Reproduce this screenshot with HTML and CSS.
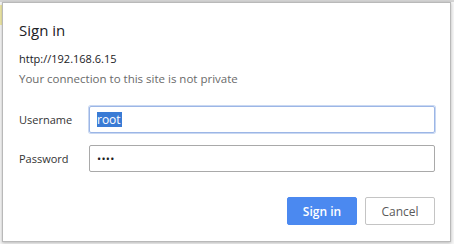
FILE: index.html
```html
<!DOCTYPE html>
<html lang="en">
<head>
<meta charset="utf-8">
<title>Sign in</title>
<link rel="stylesheet" href="styles.css">
</head>
<body>
<div class="backdrop">
  <div class="dialog">
    <h1 class="title">Sign in</h1>
    <div class="origin">http://192.168.6.15</div>
    <div class="warning">Your connection to this site is not private</div>
    <div class="fields">
      <div class="row">
        <label class="label">Username</label>
        <div class="input focused"><span class="selected">root</span></div>
      </div>
      <div class="row">
        <label class="label">Password</label>
        <div class="input"><span class="dots">••••</span></div>
      </div>
    </div>
    <div class="actions">
      <button class="btn primary">Sign in</button>
      <button class="btn secondary">Cancel</button>
    </div>
  </div>
</div>
</body>
</html>
```
FILE: styles.css
```css
html, body {
  margin: 0;
  padding: 0;
}
body {
  width: 454px;
  height: 244px;
  overflow: hidden;
  background: #f3f3f3;
  font-family: "Open Sans", "Noto Sans", sans-serif;
}
.backdrop {
  width: 454px;
  height: 244px;
  padding: 2px 0 0 2px;
  box-sizing: border-box;
  background:
    linear-gradient(#efe8a6, #efe8a6) 0 5px / 2px 20px no-repeat,
    linear-gradient(#d4d4d4 0 2px, #f6f6f6 2px);
}
.dialog {
  width: 447px;
  height: 238px;
  box-sizing: content-box;
  border: 1px solid #b9b9b9;
  background: #ffffff;
  box-shadow: 0 1px 3px rgba(0, 0, 0, 0.25);
  display: flex;
  flex-direction: column;
}
.title {
  margin: 16px 0 0 16px;
  font-size: 15px;
  font-weight: 400;
  line-height: 22px;
  color: #202124;
}
.origin {
  margin: 10px 0 0 16px;
  font-size: 11px;
  line-height: 16px;
  color: #202124;
}
.warning {
  margin: 4px 0 0 16px;
  font-size: 11.5px;
  line-height: 16px;
  color: #6a6a6a;
}
.fields {
  margin: 19px 15px 0 16px;
  display: flex;
  flex-direction: column;
  gap: 12px;
}
.row {
  display: flex;
  align-items: center;
}
.label {
  width: 70px;
  font-size: 11px;
  line-height: 16px;
  color: #333333;
}
.input {
  box-sizing: border-box;
  width: 346px;
  height: 27px;
  border: 1px solid #a9a9a9;
  border-radius: 2px;
  padding: 0 7px;
  display: flex;
  align-items: center;
  font-size: 12px;
  color: #202124;
}
.input.focused {
  border-color: #9cb6e6;
  box-shadow: 0 0 0 1px #c9d8f2;
}
.selected {
  background: #3a7bd5;
  color: #ffffff;
  line-height: 15px;
  padding-right: 1px;
}
.dots {
  font-size: 11px;
  letter-spacing: 0.3px;
  color: #202124;
}
.actions {
  margin: 25px 15px 0 16px;
  display: flex;
  justify-content: flex-end;
  gap: 8px;
}
.btn {
  box-sizing: border-box;
  width: 70px;
  height: 28px;
  border-radius: 2px;
  font-family: "Open Sans", "Noto Sans", sans-serif;
  font-size: 12px;
  padding: 0;
  cursor: pointer;
}
.primary {
  background: #4b89f0;
  border: 1px solid #4b89f0;
  color: #ffffff;
  font-weight: 600;
}
.secondary {
  background: #ffffff;
  border: 1px solid #c4c4c4;
  color: #5a5a5a;
}
```
